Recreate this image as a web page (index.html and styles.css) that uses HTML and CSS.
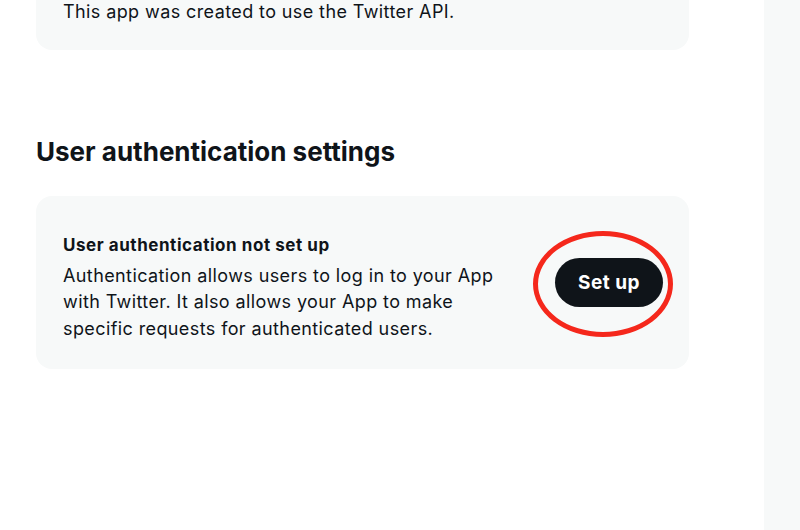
FILE: index.html
```html
<!DOCTYPE html>
<html lang="en">
<head>
<meta charset="utf-8">
<title>App settings</title>
<link rel="stylesheet" href="styles.css">
</head>
<body>
<div class="layout">
  <main class="main">
    <section class="card card-top">
      <p class="card-text">This app was created to use the Twitter API.</p>
    </section>

    <h2 class="section-title">User authentication settings</h2>

    <section class="card card-auth">
      <div class="auth-info">
        <h3 class="auth-title">User authentication not set up</h3>
        <p class="auth-desc">Authentication allows users to log in to your App with Twitter. It also allows your App to make specific requests for authenticated users.</p>
      </div>
      <div class="btn-wrap">
        <button class="btn-setup" type="button">Set up</button>
        <span class="highlight-ring" aria-hidden="true"></span>
      </div>
    </section>
  </main>
  <aside class="sidebar"></aside>
</div>
</body>
</html>
```

FILE: styles.css
```css
* {
  box-sizing: border-box;
}

html, body {
  margin: 0;
  padding: 0;
  height: 100%;
  background: #ffffff;
}

body {
  font-family: Inter, "Liberation Sans", Arial, sans-serif;
  color: #0f1419;
  overflow: hidden;
}

.layout {
  display: flex;
  height: 530px;
}

.main {
  flex: 1;
  padding-left: 36px;
  padding-right: 75px;
}

.sidebar {
  width: 36px;
  background: #f7f9f9;
}

.card {
  background: #f7f9f9;
  border-radius: 16px;
}

.card-top {
  border-radius: 0 0 16px 16px;
  padding: 0 27px 26px;
}

.card-text {
  margin: 0;
  font-size: 18px;
  line-height: 24px;
  letter-spacing: 0.4px;
}

.section-title {
  margin: 86px 0 28px;
  font-size: 26px;
  line-height: 32px;
  font-weight: 700;
  letter-spacing: 0;
}

.card-auth {
  display: flex;
  align-items: center;
  padding: 37px 26px 27px 27px;
}

.auth-info {
  flex: 1;
  max-width: 440px;
}

.auth-title {
  margin: 0 0 5.5px;
  font-size: 17px;
  line-height: 24px;
  font-weight: 700;
  letter-spacing: 0.55px;
}

.auth-desc {
  margin: 0;
  font-size: 18px;
  line-height: 26.5px;
  letter-spacing: 0.4px;
}

.btn-wrap {
  position: relative;
  margin-left: auto;
  margin-top: -10px;
}

.btn-setup {
  display: block;
  width: 108px;
  height: 49px;
  border: none;
  border-radius: 25px;
  background: #0f1419;
  color: #ffffff;
  font-family: Inter, "Liberation Sans", Arial, sans-serif;
  font-size: 19px;
  font-weight: 700;
  letter-spacing: 0.5px;
  cursor: pointer;
}

.highlight-ring {
  position: absolute;
  left: -22px;
  top: -27px;
  width: 140px;
  height: 106px;
  border: 5px solid #f5281c;
  border-radius: 50%;
  pointer-events: none;
}
```
